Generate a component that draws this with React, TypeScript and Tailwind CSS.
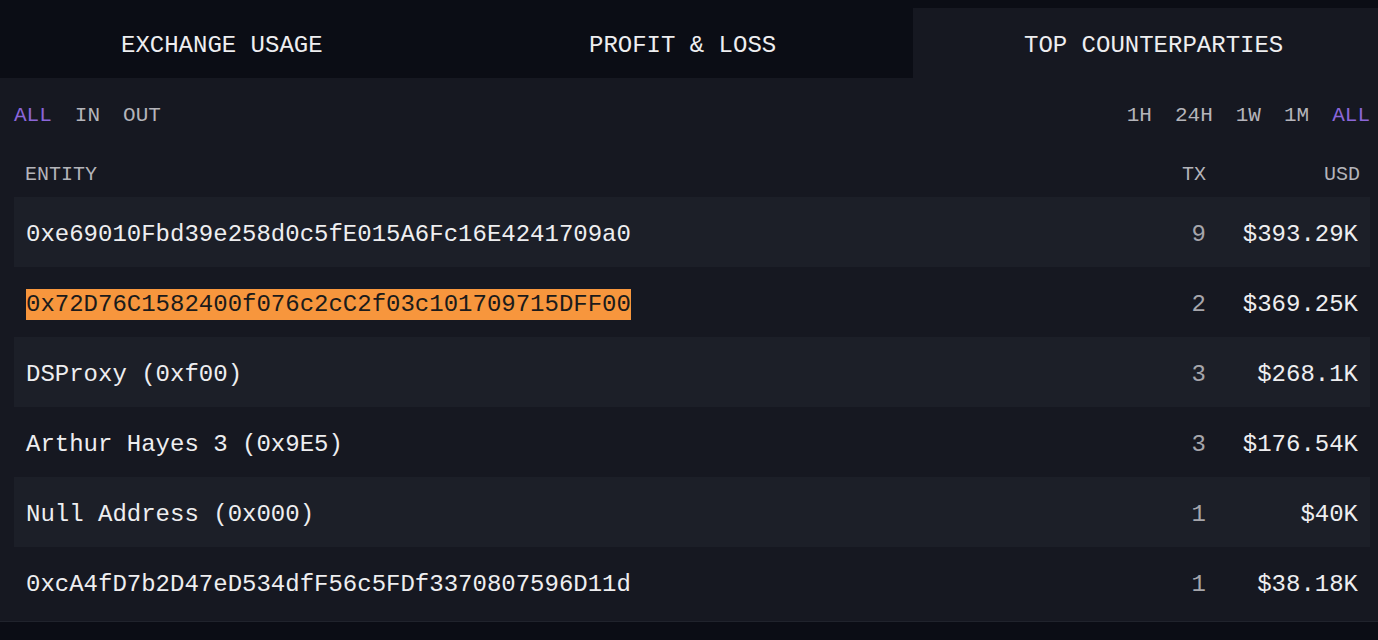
import React from "react";

interface Row {
  entity: string;
  tx: number;
  usd: string;
  highlight?: boolean;
}

const rows: Row[] = [
  { entity: "0xe69010Fbd39e258d0c5fE015A6Fc16E4241709a0", tx: 9, usd: "$393.29K" },
  { entity: "0x72D76C1582400f076c2cC2f03c101709715DFF00", tx: 2, usd: "$369.25K", highlight: true },
  { entity: "DSProxy (0xf00)", tx: 3, usd: "$268.1K" },
  { entity: "Arthur Hayes 3 (0x9E5)", tx: 3, usd: "$176.54K" },
  { entity: "Null Address (0x000)", tx: 1, usd: "$40K" },
  { entity: "0xcA4fD7b2D47eD534dfF56c5FDf3370807596D11d", tx: 1, usd: "$38.18K" },
];

const dirFilters = ["ALL", "IN", "OUT"];
const timeFilters = ["1H", "24H", "1W", "1M", "ALL"];

const App: React.FC = () => {
  return (
    <div
      className="w-[1378px] h-[640px] bg-[#0b0d15] text-[#eeeef0] overflow-hidden"
      style={{ fontFamily: '"Liberation Mono", "DejaVu Sans Mono", monospace' }}
    >
      {/* Tabs */}
      <div className="flex items-end h-[78px] text-[24px]">
        <div className="w-[452px] h-[70px] flex items-center pt-[6px] pl-[121px]">EXCHANGE USAGE</div>
        <div className="w-[461px] h-[70px] flex items-center pt-[6px] pl-[137px]">PROFIT &amp; LOSS</div>
        <div className="flex-1 h-[70px] flex items-center pt-[6px] pl-[111px] bg-[#161821]">
          TOP COUNTERPARTIES
        </div>
      </div>

      {/* Body */}
      <div className="bg-[#161821] pt-[24px] pb-[4px] border-b border-[#20232c]">
        <div className="flex justify-between h-[28px] leading-[28px] text-[21px] pl-[14px] pr-[8px]">
          <div className="flex gap-[23px]">
            {dirFilters.map((f, i) => (
              <span key={f} className={i === 0 ? "text-[#8b66d9]" : "text-[#b4b4ba]"}>
                {f}
              </span>
            ))}
          </div>
          <div className="flex gap-[23px]">
            {timeFilters.map((f, i) => (
              <span
                key={f + i}
                className={i === timeFilters.length - 1 ? "text-[#8b66d9]" : "text-[#b4b4ba]"}
              >
                {f}
              </span>
            ))}
          </div>
        </div>

        <div className="flex items-center mt-[23px] h-[40px] pt-[4px] mb-[4px] px-[25px] pr-[18px] text-[20px] text-[#b4b4ba]">
          <div className="flex-1">ENTITY</div>
          <div className="text-right">TX</div>
          <div className="w-[154px] text-right">USD</div>
        </div>

        <div className="px-[14px] pr-[8px]">
          {rows.map((r, i) => (
            <div
              key={r.entity}
              className={`flex items-center h-[70px] pt-[5px] px-[12px] text-[24px] ${
                i % 2 === 0 ? "bg-[#1c1f28]" : "bg-[#161821]"
              }`}
            >
              <div className="flex-1">
                {r.highlight ? (
                  <span className="bg-[#f7963d] text-[#1b1b1b] leading-[31px] inline-block">
                    {r.entity}
                  </span>
                ) : (
                  r.entity
                )}
              </div>
              <div className="text-right text-[#a6a6ac]">{r.tx}</div>
              <div className="w-[152px] text-right">{r.usd}</div>
            </div>
          ))}
        </div>
      </div>
    </div>
  );
};

export default App;
